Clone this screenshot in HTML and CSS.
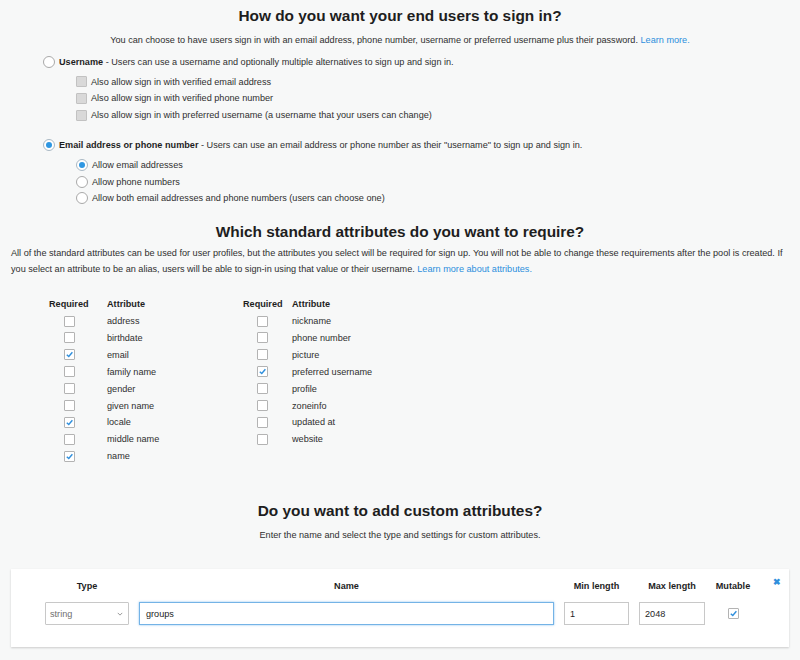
FILE: index.html
```html
<!DOCTYPE html>
<html>
<head>
<meta charset="utf-8">
<link rel="stylesheet" href="styles.css">
</head>
<body>
<div class="page">
  <h1 class="title t1">How do you want your end users to sign in?</h1>
  <p class="sub s1">You can choose to have users sign in with an email address, phone number, username or preferred username plus their password. <a class="link">Learn more.</a></p>

  <div class="opt main o1"><span class="radio"></span><span><b>Username</b> - Users can use a username and optionally multiple alternatives to sign up and sign in.</span></div>
  <div class="nested n1">
    <div class="opt"><span class="box dis"></span><span>Also allow sign in with verified email address</span></div>
    <div class="opt"><span class="box dis"></span><span>Also allow sign in with verified phone number</span></div>
    <div class="opt"><span class="box dis"></span><span>Also allow sign in with preferred username (a username that your users can change)</span></div>
  </div>

  <div class="opt main o2"><span class="radio on"></span><span><b>Email address or phone number</b> - Users can use an email address or phone number as their "username" to sign up and sign in.</span></div>
  <div class="nested n2">
    <div class="opt"><span class="radio on"></span><span>Allow email addresses</span></div>
    <div class="opt"><span class="radio"></span><span>Allow phone numbers</span></div>
    <div class="opt"><span class="radio"></span><span>Allow both email addresses and phone numbers (users can choose one)</span></div>
  </div>

  <h2 class="title t2">Which standard attributes do you want to require?</h2>
  <p class="para">All of the standard attributes can be used for user profiles, but the attributes you select will be required for sign up. You will not be able to change these requirements after the pool is created. If<br>you select an attribute to be an alias, users will be able to sign-in using that value or their username. <a class="link">Learn more about attributes.</a></p>

  <div class="tables">
    <div class="attrs left">
      <div class="hd">Required</div><div class="hd">Attribute</div>
      <div class="c"><span class="box"></span></div><div>address</div>
      <div class="c"><span class="box"></span></div><div>birthdate</div>
      <div class="c"><span class="box chk"><svg viewBox="0 0 10 10"><polyline points="2,5.2 4.2,7.2 8.2,2.6"/></svg></span></div><div>email</div>
      <div class="c"><span class="box"></span></div><div>family name</div>
      <div class="c"><span class="box"></span></div><div>gender</div>
      <div class="c"><span class="box"></span></div><div>given name</div>
      <div class="c"><span class="box chk"><svg viewBox="0 0 10 10"><polyline points="2,5.2 4.2,7.2 8.2,2.6"/></svg></span></div><div>locale</div>
      <div class="c"><span class="box"></span></div><div>middle name</div>
      <div class="c"><span class="box chk"><svg viewBox="0 0 10 10"><polyline points="2,5.2 4.2,7.2 8.2,2.6"/></svg></span></div><div>name</div>
    </div>
    <div class="attrs right">
      <div class="hd">Required</div><div class="hd">Attribute</div>
      <div class="c"><span class="box"></span></div><div>nickname</div>
      <div class="c"><span class="box"></span></div><div>phone number</div>
      <div class="c"><span class="box"></span></div><div>picture</div>
      <div class="c"><span class="box chk"><svg viewBox="0 0 10 10"><polyline points="2,5.2 4.2,7.2 8.2,2.6"/></svg></span></div><div>preferred username</div>
      <div class="c"><span class="box"></span></div><div>profile</div>
      <div class="c"><span class="box"></span></div><div>zoneinfo</div>
      <div class="c"><span class="box"></span></div><div>updated at</div>
      <div class="c"><span class="box"></span></div><div>website</div>
    </div>
  </div>

  <h2 class="title t3">Do you want to add custom attributes?</h2>
  <p class="sub s3">Enter the name and select the type and settings for custom attributes.</p>

  <div class="card">
    <span class="close">&#x2716;</span>
    <div class="grid">
      <div class="ch">Type</div>
      <div class="ch">Name</div>
      <div class="ch">Min length</div>
      <div class="ch">Max length</div>
      <div class="ch">Mutable</div>
      <div class="select"><span>string</span><svg viewBox="0 0 8 5"><polyline points="1,1 4,4 7,1"/></svg></div>
      <div class="input focus">groups</div>
      <div class="input">1</div>
      <div class="input">2048</div>
      <div class="cc"><span class="box chk"><svg viewBox="0 0 10 10"><polyline points="2,5.2 4.2,7.2 8.2,2.6"/></svg></span></div>
    </div>
  </div>
</div>
</body>
</html>
```
FILE: styles.css
```css
html, body {
  margin: 0;
  padding: 0;
  background: #f7f8f8;
}
body {
  font-family: "Liberation Sans", Arial, Helvetica, sans-serif;
  font-size: 9.15px;
  color: #2f2f2f;
  width: 800px;
  height: 660px;
  overflow: hidden;
}
.page {
  padding: 6px 11px 0 11px;
}
.title {
  margin: 0;
  text-align: center;
  font-weight: bold;
  color: #1e1e1e;
  font-size: 15.4px;
  line-height: 20px;
}
.sub {
  margin: 0;
  text-align: center;
  line-height: 14px;
}
.s1 { margin-top: 7px; }
.link { color: #2b8fdd; }
.opt {
  display: flex;
  align-items: center;
  line-height: 14px;
  height: 16.6px;
}
.opt b { color: #1e1e1e; }
.main {
  padding-left: 32px;
}
.o1 { margin-top: 7px; }
.o2 { margin-top: 13px; }
.nested {
  padding-left: 65px;
}
.n1 { margin-top: 3px; }
.n2 { margin-top: 4px; }
.radio {
  width: 10px;
  height: 10px;
  border: 1px solid #a9a9a9;
  border-radius: 50%;
  background: #fff;
  margin-right: 4px;
  flex: none;
  position: relative;
  box-sizing: content-box;
}
.radio.on {
  border-color: #a9b8c4;
}
.radio.on::after {
  content: "";
  position: absolute;
  left: 2px;
  top: 2px;
  width: 6px;
  height: 6px;
  border-radius: 50%;
  background: #2f97e2;
}
.box {
  width: 9px;
  height: 9px;
  border: 1px solid #b3b3b3;
  background: #fff;
  display: inline-block;
  flex: none;
  margin-right: 4px;
  border-radius: 1px;
  position: relative;
}
.box.dis {
  background: #d9d9d9;
  border-color: #c2c2c2;
}
.box svg {
  position: absolute;
  left: 0;
  top: 0;
  width: 9px;
  height: 9px;
}
.box svg polyline {
  fill: none;
  stroke: #2f8fdc;
  stroke-width: 1.6;
}
.t2 { margin-top: 15px; }
.para {
  margin: 3px 0 0 0;
  line-height: 16px;
  white-space: nowrap;
}
.tables {
  display: flex;
  margin-top: 19px;
}
.attrs {
  display: grid;
  grid-auto-rows: 16.9px;
  align-items: center;
  line-height: 14px;
}
.attrs .hd {
  font-weight: bold;
  color: #1e1e1e;
  height: 18px;
  display: flex;
  align-items: center;
}
.left {
  margin-left: 38px;
  grid-template-columns: 58px 136px;
}
.right {
  grid-template-columns: 49px 120px;
}
.attrs .c {
  display: flex;
  justify-content: center;
  padding-right: 18px;
}
.right .c { padding-right: 10px; }
.attrs .c .box { margin-right: 0; }
.t3 { margin-top: 36px; }
.s3 { margin-top: 7px; }
.card {
  margin-top: 27px;
  background: #fff;
  box-shadow: 0 1px 2px rgba(0, 0, 0, 0.18);
  height: 78px;
  position: relative;
  box-sizing: border-box;
  padding: 10px 0 0 34px;
}
.close {
  position: absolute;
  right: 8px;
  top: 8px;
  color: #2f8fdc;
  font-size: 9px;
  font-weight: bold;
}
.grid {
  display: grid;
  grid-template-columns: 84px 415px 65px 66px 36px;
  column-gap: 10px;
  grid-template-rows: 14px 24px;
  row-gap: 9px;
  align-items: center;
}
.ch {
  font-weight: bold;
  color: #1e1e1e;
  text-align: center;
  white-space: nowrap;
}
.select {
  height: 23px;
  box-sizing: border-box;
  border: 1px solid #c8c8c8;
  border-radius: 1px;
  display: flex;
  align-items: center;
  justify-content: space-between;
  padding: 0 5px 0 4px;
  color: #6f6f6f;
  background: #fff;
}
.select svg {
  width: 6px;
  height: 4px;
}
.select svg polyline {
  fill: none;
  stroke: #777;
  stroke-width: 1;
}
.input {
  height: 23px;
  box-sizing: border-box;
  border: 1px solid #c8c8c8;
  display: flex;
  align-items: center;
  padding-left: 5px;
  color: #1e1e1e;
  background: #fff;
}
.input.focus {
  border-color: #74b3e6;
  box-shadow: 0 0 2px rgba(62, 150, 226, 0.6);
  padding-left: 6px;
}
.cc {
  display: flex;
  justify-content: center;
}
.cc .box { margin-right: 0; }
```
